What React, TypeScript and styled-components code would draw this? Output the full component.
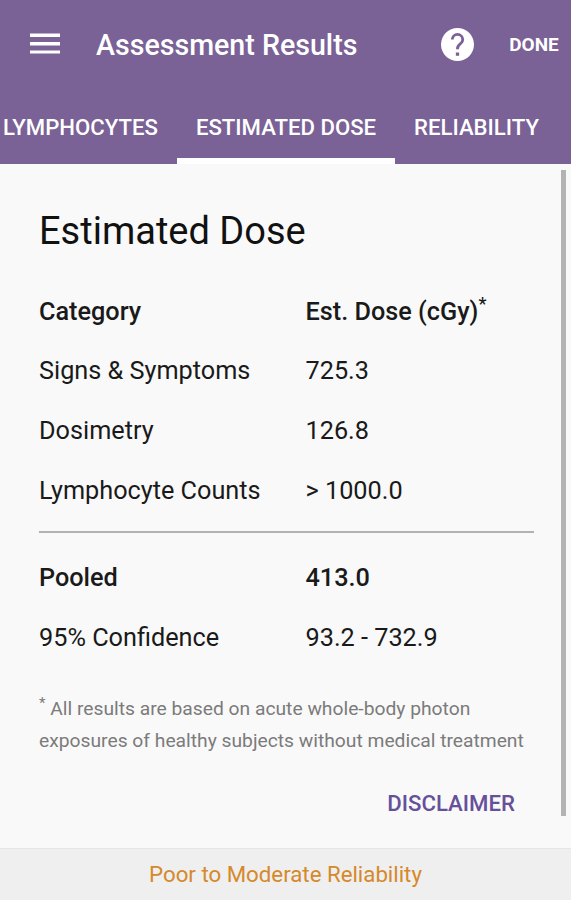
import React from "react";
import styled, { createGlobalStyle } from "styled-components";

const GlobalStyle = createGlobalStyle`
  * { box-sizing: border-box; }
  body { margin: 0; background: #f9f9f9; font-family: Roboto, "Liberation Sans", sans-serif; }
  button { border: 0; padding: 0; background: none; font-family: inherit; color: inherit; }
`;

const Screen = styled.div`
  display: flex;
  flex-direction: column;
  height: 900px;
  width: 571px;
  overflow: hidden;
  background: #f9f9f9;
`;

const Header = styled.header`
  flex: none;
  height: 164px;
  background: #7a6196;
  color: #fff;
`;

const Toolbar = styled.div`
  display: flex;
  align-items: center;
  height: 89px;
  padding: 0 12px 0 30px;
`;

const IconButton = styled.button`
  display: flex;
  flex: none;
`;

const MenuButton = styled(IconButton)`
  padding-bottom: 2px;
`;

const Title = styled.h1`
  flex: 1;
  margin: 0 0 0 36px;
  font-size: 28.6px;
  font-weight: 500;
  white-space: nowrap;
`;

const DoneButton = styled.button`
  width: 50px;
  margin-left: 35px;
  font-size: 19px;
  font-weight: 700;
  white-space: nowrap;
`;

const Tabs = styled.nav`
  display: flex;
  height: 75px;
`;

const Tab = styled.button<{ $width: number; $active?: boolean; $endGap?: number }>`
  flex: none;
  width: ${(p) => p.$width}px;
  padding: 6px ${(p) => p.$endGap ?? 0}px 0 0;
  font-size: 22.15px;
  font-weight: 500;
  white-space: nowrap;
  border-bottom: 6px solid ${(p) => (p.$active ? "#fff" : "transparent")};
`;

const Content = styled.main`
  display: flex;
  flex: 1;
  justify-content: space-between;
  min-height: 0;
`;

const Panel = styled.section`
  display: flex;
  flex-direction: column;
  width: 534px;
  padding: 37px 0 0 39px;
`;

const Heading = styled.h2`
  height: 60px;
  margin: 0 0 20px;
  font-size: 38px;
  font-weight: 400;
  line-height: 60px;
  color: #111;
  white-space: nowrap;
`;

const Row = styled.div<{ $strong?: boolean }>`
  display: grid;
  grid-template-columns: 266.5px 1fr;
  height: 60px;
  line-height: 61px;
  font-size: 25.25px;
  font-weight: ${(p) => (p.$strong ? 500 : 400)};
  color: #1a1a1a;
  white-space: nowrap;
`;

const EstimateRow = styled(Row)`
  line-height: 59px;
`;

const Star = styled.sup`
  font-size: 18px;
  line-height: 0;
  vertical-align: 10px;
`;

const Divider = styled.hr`
  width: 495px;
  height: 2px;
  margin: 10px 0 14px;
  border: 0;
  background: #b2b2b2;
`;

const Footnote = styled.p`
  margin: 26px 0 0;
  font-size: 19.25px;
  line-height: 32px;
  color: #7b7b7b;
  white-space: nowrap;
`;

const NoteStar = styled(Star)`
  font-size: 15px;
  vertical-align: 7px;
`;

const Disclaimer = styled.button`
  align-self: flex-end;
  margin: 32px 19px 0 0;
  font-size: 22.2px;
  font-weight: 500;
  line-height: 28px;
  color: #66509a;
`;

const ScrollThumb = styled.div`
  width: 5px;
  height: 646px;
  margin: 6px 5px 0 0;
  background: #b3b3b3;
`;

const Footer = styled.footer`
  flex: none;
  height: 52px;
  border-top: 1px solid #e6e6e6;
  background: #efefef;
  color: #d5892b;
  font-size: 22.25px;
  line-height: 51px;
  text-align: center;
`;

const estimates = [
  ["Signs & Symptoms", "725.3"],
  ["Dosimetry", "126.8"],
  ["Lymphocyte Counts", "> 1000.0"],
];

export default function App() {
  return (
    <Screen>
      <GlobalStyle />
      <Header>
        <Toolbar>
          <MenuButton aria-label="Menu">
            <svg width="30" height="22" viewBox="0 0 30 22" fill="#fff">
              <path d="M0 .4h30v3.5H0zM0 9h30v3.5H0zM0 17.4h30v3.2H0z" />
            </svg>
          </MenuButton>
          <Title>Assessment Results</Title>
          <IconButton aria-label="Help">
            <svg width="33" height="33" viewBox="2 2 20 20" fill="#fff">
              <path
                fillRule="evenodd"
                d="M12 2a10 10 0 1 0 0 20 10 10 0 0 0 0-20zM11 16.8h2v2h-2zM12 5a4 4 0 0 0-4 4h1.7a2.3 2.3 0 1 1 4.6 0c0 2.1-3.2 2.3-3.2 5.9h1.8c0-2.6 3.1-3 3.1-5.9a4 4 0 0 0-4-4z"
              />
            </svg>
          </IconButton>
          <DoneButton>DONE</DoneButton>
        </Toolbar>
        <Tabs>
          <Tab $width={177} $endGap={16}>LYMPHOCYTES</Tab>
          <Tab $width={218} $active>ESTIMATED DOSE</Tab>
          <Tab $width={163}>RELIABILITY</Tab>
        </Tabs>
      </Header>
      <Content>
        <Panel>
          <Heading>Estimated Dose</Heading>
          <Row $strong>
            <span>Category</span>
            <span>Est. Dose (cGy)<Star>*</Star></span>
          </Row>
          {estimates.map(([label, value]) => (
            <EstimateRow key={label}>
              <span>{label}</span>
              <span>{value}</span>
            </EstimateRow>
          ))}
          <Divider />
          <Row $strong>
            <span>Pooled</span>
            <span>413.0</span>
          </Row>
          <Row>
            <span>95% Confidence</span>
            <span>93.2 - 732.9</span>
          </Row>
          <Footnote>
            <NoteStar>*</NoteStar> All results are based on acute whole-body photon
            <br />
            exposures of healthy subjects without medical treatment
          </Footnote>
          <Disclaimer>DISCLAIMER</Disclaimer>
        </Panel>
        <ScrollThumb />
      </Content>
      <Footer>Poor to Moderate Reliability</Footer>
    </Screen>
  );
}
